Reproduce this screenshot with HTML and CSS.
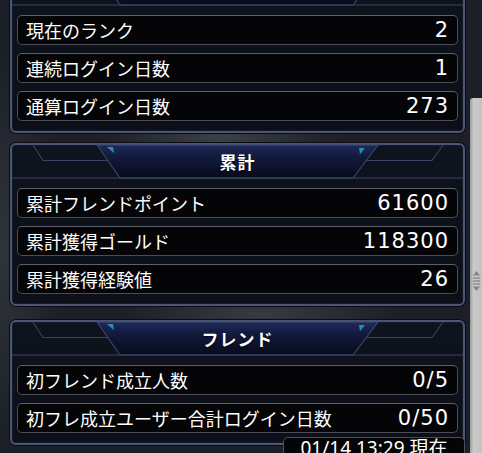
FILE: index.html
```html
<!DOCTYPE html>
<html lang="ja">
<head>
    <meta charset="UTF-8">
    <meta name="viewport" content="width=device-width, initial-scale=1.0">
    <title>ステータス</title>
    <link rel="stylesheet" href="styles.css">
</head>
<body>
    <svg class="defs" width="0" height="0">
        <defs>
            <linearGradient id="tabFill" x1="0" y1="0" x2="0" y2="1">
                <stop offset="0" stop-color="#1f2a58"/>
                <stop offset="0.35" stop-color="#121a3e"/>
                <stop offset="1" stop-color="#080b1a"/>
            </linearGradient>
        </defs>
    </svg>
    <div class="page">
        <div class="content">
            <section class="panel panel-first">
                <div class="panel-head">
                    <svg class="head-art" viewBox="0 0 451 32" preserveAspectRatio="none">
                        <polygon class="tab" points="85,0 108,32 341,32 366,0"/>
                        <polyline class="deco" points="21,0 31,15 96,15"/>
                        <polyline class="deco" points="431,0 420,15 354,15"/>
                        <line class="deco" x1="0" y1="32" x2="451" y2="32"/>
                        <polygon class="gem" points="95,2 101,2 102,8"/>
                        <polygon class="gem" points="347,3 353,3 348,9"/>
                    </svg>
                    <h2 class="panel-title"></h2>
                </div>
                <div class="rows">
                    <div class="row"><span class="label">現在のランク</span><span class="value">2</span></div>
                    <div class="row"><span class="label">連続ログイン日数</span><span class="value">1</span></div>
                    <div class="row"><span class="label">通算ログイン日数</span><span class="value">273</span></div>
                </div>
            </section>

            <section class="panel">
                <div class="panel-head">
                    <svg class="head-art" viewBox="0 0 451 32" preserveAspectRatio="none">
                        <polygon class="tab" points="85,0 108,32 341,32 366,0"/>
                        <polyline class="deco" points="21,0 31,15 96,15"/>
                        <polyline class="deco" points="431,0 420,15 354,15"/>
                        <line class="deco" x1="0" y1="32" x2="451" y2="32"/>
                        <polygon class="gem" points="95,2 101,2 102,8"/>
                        <polygon class="gem" points="347,3 353,3 348,9"/>
                    </svg>
                    <h2 class="panel-title">累計</h2>
                </div>
                <div class="rows">
                    <div class="row"><span class="label">累計フレンドポイント</span><span class="value">61600</span></div>
                    <div class="row"><span class="label">累計獲得ゴールド</span><span class="value">118300</span></div>
                    <div class="row"><span class="label">累計獲得経験値</span><span class="value">26</span></div>
                </div>
            </section>

            <section class="panel">
                <div class="panel-head">
                    <svg class="head-art" viewBox="0 0 451 32" preserveAspectRatio="none">
                        <polygon class="tab" points="85,0 108,32 341,32 366,0"/>
                        <polyline class="deco" points="21,0 31,15 96,15"/>
                        <polyline class="deco" points="431,0 420,15 354,15"/>
                        <line class="deco" x1="0" y1="32" x2="451" y2="32"/>
                        <polygon class="gem" points="95,2 101,2 102,8"/>
                        <polygon class="gem" points="347,3 353,3 348,9"/>
                    </svg>
                    <h2 class="panel-title">フレンド</h2>
                </div>
                <div class="rows">
                    <div class="row"><span class="label">初フレンド成立人数</span><span class="value">0/5</span></div>
                    <div class="row"><span class="label">初フレ成立ユーザー合計ログイン日数</span><span class="value">0/50</span></div>
                </div>
                <div class="stamp">01/14 13:29 現在</div>
            </section>
        </div>

        <div class="scrollbar">
            <div class="thumb">
                <svg class="grip" viewBox="0 0 10 22">
                    <polygon points="5,0 9,5 1,5"/>
                    <rect x="1" y="7" width="8" height="1.4"/>
                    <rect x="1" y="10.3" width="8" height="1.4"/>
                    <rect x="1" y="13.6" width="8" height="1.4"/>
                    <polygon points="1,17 9,17 5,22"/>
                </svg>
            </div>
        </div>
    </div>
</body>
</html>
```

FILE: styles.css
```css
html, body {
    margin: 0;
    padding: 0;
    height: 100%;
    overflow: hidden;
}
body {
    font-family: "Noto Sans CJK JP", "Noto Sans", sans-serif;
    color: #fff;
    background-color: #1c1f27;
    background-image:
        radial-gradient(ellipse 120px 40px at 220px 138px, rgba(120, 124, 134, 0.35), transparent),
        radial-gradient(ellipse 140px 30px at 260px 314px, rgba(120, 124, 134, 0.3), transparent),
        radial-gradient(ellipse 60px 200px at 4px 250px, rgba(70, 72, 80, 0.5), transparent);
}
.defs {
    position: absolute;
}
.page {
    display: flex;
    height: 100%;
}
.content {
    width: 455px;
    padding: 0 5px 0 10px;
}
.panel {
    position: relative;
    margin-bottom: 14px;
    background: linear-gradient(#0f131d, #0c0f17);
    border: 2px solid #4b5675;
    border-radius: 6px;
    box-shadow: 0 0 0 1px #0a0c12, inset 0 0 0 1px #151a28;
}
.panel-first {
    margin-top: -30px;
    margin-bottom: 10px;
}
.panel-head {
    display: grid;
    height: 32px;
}
.head-art,
.panel-title {
    grid-area: 1 / 1;
}
.head-art {
    width: 451px;
    height: 33px;
    overflow: visible;
}
.tab {
    fill: url(#tabFill);
    stroke: #3e4b72;
    stroke-width: 1;
}
.deco {
    fill: none;
    stroke: #3a4566;
    stroke-width: 1;
}
.gem {
    fill: #2690b4;
}
.panel-title {
    margin: 0;
    align-self: center;
    justify-self: center;
    font-size: 17px;
    font-weight: bold;
    line-height: 20px;
    letter-spacing: 1px;
    text-shadow: 0 1px 2px #000;
}
.rows {
    display: flex;
    flex-direction: column;
    gap: 8px;
    padding: 11px 5px 10px;
}
.row {
    display: flex;
    justify-content: space-between;
    align-items: center;
    height: 28px;
    padding: 0 8px;
    background-color: #050507;
    border: 1px solid #4a4d58;
    border-top-color: #5d606b;
    border-radius: 5px;
}
.label {
    font-size: 18px;
    line-height: 28px;
    white-space: nowrap;
}
.value {
    font-family: "DejaVu Sans", sans-serif;
    font-size: 21px;
    line-height: 28px;
    letter-spacing: 1px;
}
.stamp {
    position: absolute;
    right: -2px;
    top: 115px;
    width: 180px;
    height: 28px;
    background-color: #050507;
    border: 1px solid #4a4d58;
    border-radius: 5px;
    font-family: "Noto Sans", "Noto Sans CJK JP", sans-serif;
    font-size: 19px;
    line-height: 20px;
    text-align: center;
}
.scrollbar {
    width: 12px;
    padding-top: 98px;
}
.thumb {
    height: 366px;
    display: flex;
    align-items: center;
    justify-content: center;
    background: linear-gradient(to right, #9c9c9c, #cacaca 30%, #c2c2c2);
    border-radius: 3px 0 0 3px;
}
.grip {
    width: 9px;
    height: 22px;
    fill: #858585;
}
```
